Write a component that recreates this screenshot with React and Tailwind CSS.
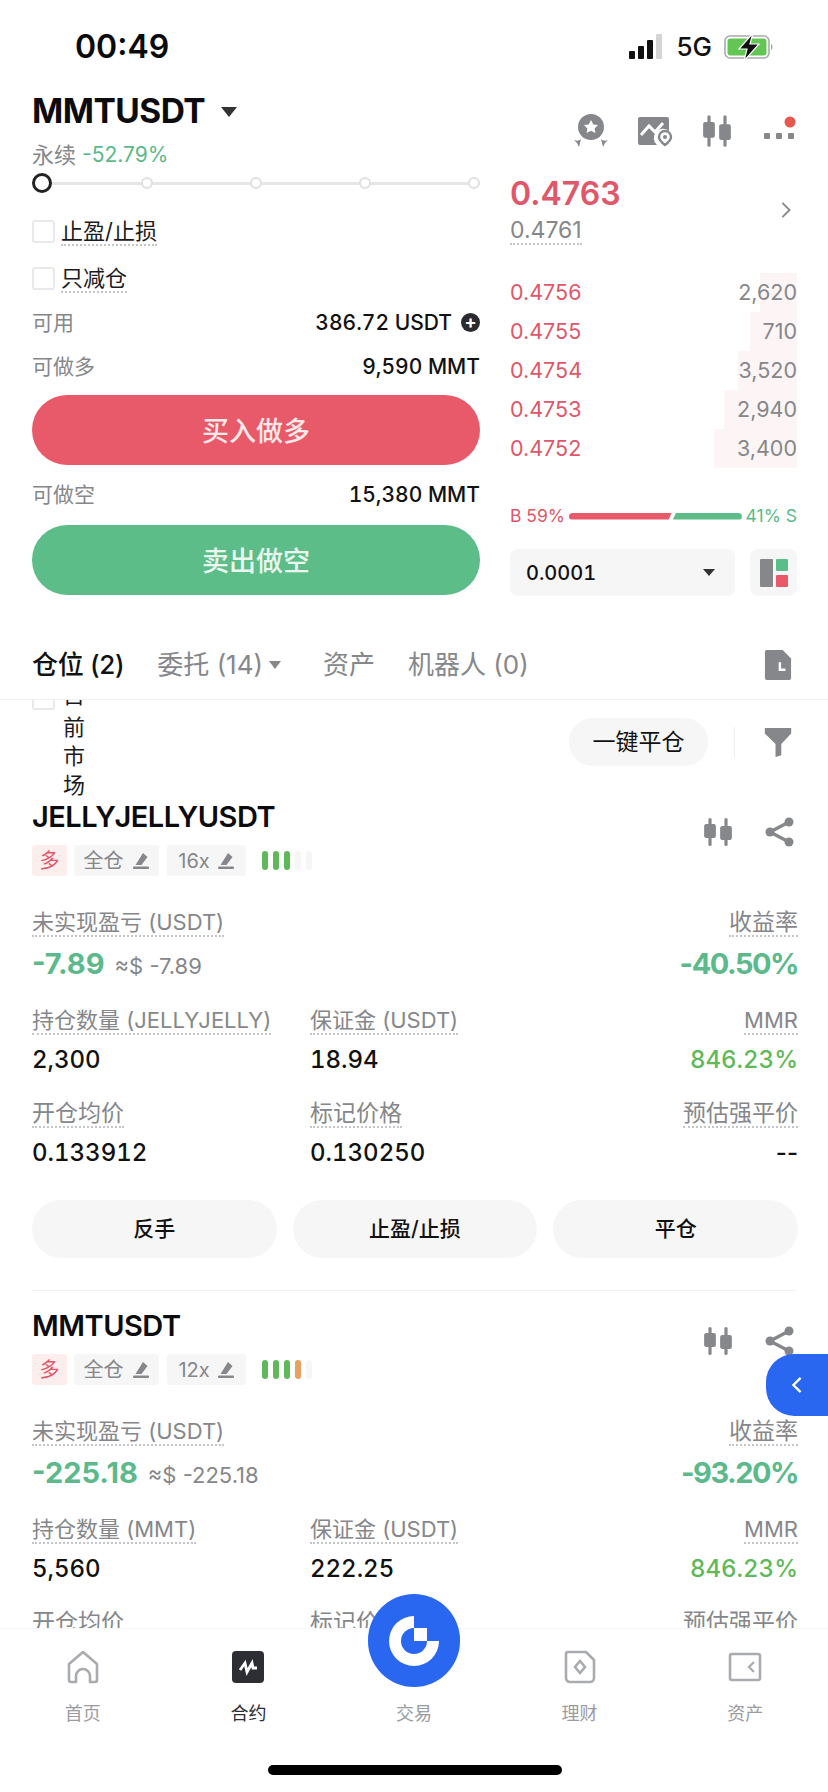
const RED = "#e0566a";
const GREEN = "#5bb98c";

const asks = [
  { price: "0.4756", size: "2,620", depth: 37 },
  { price: "0.4755", size: "710", depth: 47 },
  { price: "0.4754", size: "3,520", depth: 59 },
  { price: "0.4753", size: "2,940", depth: 73 },
  { price: "0.4752", size: "3,400", depth: 83 },
];

const tabsNav = [
  { label: "首页", icon: HomeIcon },
  { label: "合约", icon: FuturesIcon, active: true },
  { label: "交易", icon: null },
  { label: "理财", icon: WealthIcon },
  { label: "资产", icon: WalletIcon },
];

function CandleIcon({ className = "w-[32px] h-[30px]" }) {
  return (
    <svg viewBox="0 0 30 30" className={className} fill="#85878a" preserveAspectRatio="none">
      <rect x="6" y="1" width="3" height="28" rx="1.5" />
      <rect x="2" y="7" width="11" height="14" rx="2" />
      <rect x="21" y="1" width="3" height="28" rx="1.5" />
      <rect x="17" y="9" width="11" height="14" rx="2" />
    </svg>
  );
}

function ShareIcon() {
  return (
    <svg viewBox="0 0 32 32" className="w-[32px] h-[32px]" fill="#85878a" stroke="#85878a">
      <circle cx="25" cy="6" r="4.5" stroke="none" />
      <circle cx="6" cy="16" r="4.5" stroke="none" />
      <circle cx="25" cy="26" r="4.5" stroke="none" />
      <path d="M25 6 6 16l19 10" fill="none" strokeWidth="3.4" />
    </svg>
  );
}

function BadgeIcon() {
  return (
    <svg viewBox="0 0 36 36" className="w-[36px] h-[36px]" fill="#85878a">
      <circle cx="18" cy="14" r="13" />
      <path d="m18 7 2.3 4.4 4.7.7-3.4 3.3.8 4.7-4.4-2.3-4.4 2.3.8-4.7-3.4-3.3 4.7-.7z" fill="#fff" />
      <path d="M1 27c3 1 5 1 7-1l-2 8-2-4zM35 27c-3 1-5 1-7-1l2 8 2-4z" />
    </svg>
  );
}

function ChartAlertIcon() {
  return (
    <svg viewBox="0 0 36 32" className="w-[36px] h-[32px]">
      <path d="M3 2h27a2 2 0 0 1 2 2v12a9 9 0 0 0-12 14H3a2 2 0 0 1-2-2V4a2 2 0 0 1 2-2z" fill="#85878a" />
      <path d="m4 20 8-9 6 6 8-9" fill="none" stroke="#fff" strokeWidth="3" />
      <path d="M28 30c-4-3-6-5-6-8a6 6 0 0 1 12 0c0 3-2 5-6 8z" fill="none" stroke="#85878a" strokeWidth="2.4" />
      <circle cx="28" cy="22" r="2" fill="#85878a" />
    </svg>
  );
}

function EditIcon() {
  return (
    <svg viewBox="0 0 18 18" className="w-[18px] h-[18px]" fill="#85878a">
      <path d="m11 1 4.5 4-6 8H3.5z" />
      <rect x="1" y="14.5" width="16" height="2.5" rx="1" />
    </svg>
  );
}

function HomeIcon() {
  return (
    <svg viewBox="0 0 32 34" className="w-[32px] h-[34px]" fill="none" stroke="#a9abae" strokeWidth="2.6">
      <path d="M2 14 16 2l14 12v16a2 2 0 0 1-2 2h-5v-6a7 7 0 0 0-14 0v6H4a2 2 0 0 1-2-2z" strokeLinejoin="round" />
    </svg>
  );
}

function FuturesIcon() {
  return (
    <svg viewBox="0 0 32 32" className="w-[32px] h-[32px]">
      <rect width="32" height="32" rx="4" fill="#2c2e33" />
      <path d="m8 19 5-7 2 9 5-9 1 5h4" fill="none" stroke="#fff" strokeWidth="2.8" />
    </svg>
  );
}

function WealthIcon() {
  return (
    <svg viewBox="0 0 32 34" className="w-[32px] h-[34px]" fill="none" stroke="#a9abae" strokeWidth="2.6">
      <path d="M4 2h18l8 8v18a4 4 0 0 1-4 4H6a4 4 0 0 1-4-4V4a2 2 0 0 1 2-2z" strokeLinejoin="round" />
      <path d="m16 11 5 6-5 6-5-6z" />
    </svg>
  );
}

function WalletIcon() {
  return (
    <svg viewBox="0 0 34 30" className="w-[34px] h-[30px]" fill="none" stroke="#a9abae" strokeWidth="2.6">
      <rect x="2" y="2" width="30" height="26" rx="2" />
      <path d="m26 10-5 5 5 5" strokeWidth="2.2" />
    </svg>
  );
}

function Dotted({ children, className = "" }) {
  return (
    <span className={`border-b-2 border-dotted border-[#c4c5c8] leading-[25px] inline-block ${className}`}>
      {children}
    </span>
  );
}

function Check({ label }) {
  return (
    <div className="h-[47px] flex items-center gap-[6px]">
      <span className="w-[23px] h-[23px] rounded-[3px] border-2 border-[#e9e9ea]" />
      <Dotted className="text-[22px] text-[#1b1b1d] leading-[26px]">{label}</Dotted>
    </div>
  );
}

function InfoRow({ label, children, className = "" }) {
  return (
    <div className={`flex items-center justify-between ${className}`}>
      <span className="text-[21px] text-[#85878a]">{label}</span>
      <span className="text-[21px] font-medium text-[#111] tabular-nums">{children}</span>
    </div>
  );
}

function Ticks({ colors }) {
  return (
    <div className="flex gap-[5px] ml-[16px]">
      {colors.map((c, i) => (
        <span key={i} className="w-[6px] h-[19px] rounded-full" style={{ background: c }} />
      ))}
    </div>
  );
}

function Cell({ label, value, right, labelClass = "text-[22px]", valueClass = "text-[#111] tabular-nums" }) {
  return (
    <div className={`flex flex-col ${right ? "items-end" : "items-start"}`}>
      <Dotted className={`text-[#85878a] ${labelClass}`}>{label}</Dotted>
      <span className={`mt-[11px] text-[24px] font-medium leading-[28px] ${valueClass}`}>{value}</span>
    </div>
  );
}

function Position({ p }) {
  return (
    <div className="pl-[32px] pr-[30px]">
      <div className="flex justify-between">
        <div>
          <div className="text-[29px] font-semibold leading-[34px] tracking-[-0.5px] text-[#0c0c0e]">{p.name}</div>
          <div className="flex items-center mt-[11px] h-[31px] text-[20px] text-[#85878a]">
            <span className="w-[35px] h-full rounded-[3px] bg-[#fdeeee] text-[#e0566a] flex items-center justify-center">多</span>
            <span className="ml-[7px] w-[85px] h-full rounded-[3px] bg-[#f6f6f6] flex items-center justify-center gap-[8px]">
              全仓 <EditIcon />
            </span>
            <span className="ml-[8px] w-[79px] h-full rounded-[3px] bg-[#f6f6f6] flex items-center justify-center gap-[7px]">
              {p.lev} <EditIcon />
            </span>
            <Ticks colors={p.ticks} />
          </div>
        </div>
        <div className="flex items-center gap-[30px] pb-[12px] pr-[2px]">
          <CandleIcon />
          <ShareIcon />
        </div>
      </div>

      <div className="mt-[34px] flex justify-between">
        <div>
          <Dotted className="text-[22px] text-[#85878a]">未实现盈亏 (USDT)</Dotted>
          <div className="mt-[11px] flex items-baseline gap-[10px] leading-[32px]">
            <span className="text-[29px] font-bold" style={{ color: GREEN }}>{p.pnl}</span>
            <span className="text-[22px] text-[#85878a]">≈$ {p.pnl}</span>
          </div>
        </div>
        <div className="flex flex-col items-end">
          <Dotted className="text-[23px] text-[#85878a]">收益率</Dotted>
          <span className="mt-[11px] text-[29px] font-bold leading-[32px] tracking-[-1.5px]" style={{ color: GREEN }}>{p.roe}</span>
        </div>
      </div>

      <div className="mt-[26px] grid grid-cols-[278px_1fr_auto] gap-y-[27px]">
        <Cell label={`持仓数量 (${p.unit})`} value={p.qty} />
        <Cell label="保证金 (USDT)" value={p.margin} />
        <Cell right label="MMR" value="846.23%" valueClass="text-[#5fb95a] tabular-nums" />
        <Cell label="开仓均价" labelClass="text-[23px]" value={p.entry} />
        <Cell label="标记价格" labelClass="text-[23px]" value={p.mark} />
        <Cell right label="预估强平价" labelClass="text-[23px]" value="--" valueClass="text-[#111]" />
      </div>

      <div className="mt-[33px] grid grid-cols-3 gap-[16px]">
        {["反手", "止盈/止损", "平仓"].map((t) => (
          <button key={t} className="h-[58px] rounded-full bg-[#f6f6f6] text-[21px] font-medium text-[#111]">
            {t}
          </button>
        ))}
      </div>
    </div>
  );
}

const positions = [
  {
    name: "JELLYJELLYUSDT", lev: "16x", pnl: "-7.89", roe: "-40.50%", unit: "JELLYJELLY",
    qty: "2,300", margin: "18.94", entry: "0.133912", mark: "0.130250",
    ticks: ["#5fb95a", "#5fb95a", "#5fb95a", "#f6f6f6", "#f6f6f6"],
  },
  {
    name: "MMTUSDT", lev: "12x", pnl: "-225.18", roe: "-93.20%", unit: "MMT",
    qty: "5,560", margin: "222.25", entry: "0.4751", mark: "0.4763",
    ticks: ["#5fb95a", "#5fb95a", "#5fb95a", "#e8a15d", "#f6f6f6"],
  },
];

export default function App() {
  return (
    <div
      className="relative w-[828px] h-[1792px] bg-white overflow-hidden flex flex-col text-[#111]"
      style={{ fontFamily: 'Inter, "Noto Sans CJK SC", sans-serif' }}
    >
      {/* status bar */}
      <div className="h-[94px] shrink-0 pl-[75px] pr-[52px] pt-[28px] flex justify-between items-start">
        <span className="text-[32px] font-semibold leading-[38px] text-[#0a0a0a]">00:49</span>
        <div className="flex items-center gap-[12px] h-[38px]">
          <svg viewBox="0 0 36 26" className="w-[36px] h-[26px]">
            <rect x="1" y="17" width="6" height="8" rx="1" fill="#111" />
            <rect x="10" y="12" width="6" height="13" rx="1" fill="#111" />
            <rect x="19" y="6" width="6" height="19" rx="1" fill="#111" />
            <rect x="28" y="0" width="6" height="25" rx="1" fill="#d4d5d7" />
          </svg>
          <span className="text-[26px] leading-none font-medium">5G</span>
          <svg viewBox="0 0 52 28" className="w-[52px] h-[28px]">
            <rect x="1" y="3" width="44" height="22" rx="5" fill="none" stroke="#a9abae" strokeWidth="1.6" />
            <rect x="3.5" y="5.5" width="39" height="17" rx="3" fill="#62c554" />
            <path d="M47 11c2 0 2 6 0 6z" fill="#a9abae" />
            <path d="M29 0 15 16h8l-3 12 15-17h-9z" fill="#111" stroke="#fff" strokeWidth="1.2" />
          </svg>
        </div>
      </div>

      {/* trade panel */}
      <div className="shrink-0 flex h-[516px]">
        <div className="w-[448px] ml-[32px]">
          <div className="flex items-center gap-[16px] h-[36px]">
            <span className="text-[33.5px] font-bold leading-none tracking-[-0.5px] text-[#0c0c0e]">MMTUSDT</span>
            <span className="w-0 h-0 border-x-[8px] border-x-transparent border-t-[10px] border-t-[#333]" />
          </div>
          <div className="mt-[10px] flex items-center gap-[6px] h-[30px]">
            <span className="text-[22px] text-[#85878a]">永续</span>
            <span className="text-[21px]" style={{ color: GREEN }}>-52.79%</span>
          </div>

          {/* leverage slider */}
          <div className="mt-[1px] h-[24px] relative flex items-center justify-between">
            <span className="absolute left-0 right-0 h-[3px] bg-[#e6e6e7]" />
            <span className="relative w-[20px] h-[20px] -mr-[8px] rounded-full border-[3px] border-[#222] bg-white" />
            {[0, 1, 2, 3].map((i) => (
              <span key={i} className="relative w-[12px] h-[12px] rounded-full border-2 border-[#e0e0e1] bg-white" />
            ))}
          </div>

          <div className="mt-[13px]">
            <Check label="止盈/止损" />
            <Check label="只减仓" />
          </div>
          <InfoRow label="可用" className="h-[41px]">
            <span className="inline-flex items-center gap-[9px]">
              386.72 USDT
              <span className="w-[19px] h-[19px] rounded-full bg-[#2a2b2e] text-white text-[18px] leading-[18px] text-center font-bold">+</span>
            </span>
          </InfoRow>
          <InfoRow label="可做多" className="h-[47px]">9,590 MMT</InfoRow>
          <button className="mt-[5px] w-full h-[70px] pt-[5px] rounded-full bg-[#e85a69] text-[27px] font-medium text-[#fde9ea]">买入做多</button>
          <InfoRow label="可做空" className="h-[60px]">15,380 MMT</InfoRow>
          <button className="w-full h-[70px] pt-[5px] rounded-full bg-[#5cbd89] text-[27px] font-medium text-[#e9f7ef]">卖出做空</button>
        </div>

        <div className="w-[287px] ml-[30px] flex flex-col">
          <div className="flex justify-end items-center gap-[28px] h-[42px] mt-[16px] relative">
            <BadgeIcon />
            <ChartAlertIcon />
            <CandleIcon className="w-[32px] h-[34px]" />
            <svg viewBox="0 0 34 34" className="w-[34px] h-[34px] ml-[2px]" fill="#85878a">
              <rect x="1" y="19" width="6" height="6" rx="1" />
              <rect x="13" y="19" width="6" height="6" rx="1" />
              <rect x="25" y="19" width="6" height="6" rx="1" />
              <circle cx="27" cy="8" r="5.5" fill="#e8574f" />
            </svg>
          </div>
          <div className="flex justify-between items-center mt-[23px]">
            <div>
              <div className="text-[32px] font-semibold leading-[38px]" style={{ color: RED }}>0.4763</div>
              <Dotted className="text-[23px] text-[#85878a] mt-[5px]">0.4761</Dotted>
            </div>
            <svg viewBox="0 0 12 20" className="w-[12px] h-[18px] mr-[5px]" fill="none" stroke="#85878a" strokeWidth="2">
              <path d="m2 2 8 8-8 8" />
            </svg>
          </div>

          <div className="mt-[28px]">
            {asks.map((a) => (
              <div key={a.price} className="relative h-[39px] flex items-center justify-between text-[21.5px]">
                <span className="absolute right-0 top-0 bottom-0 bg-[#fdf5f5]" style={{ width: a.depth }} />
                <span className="relative" style={{ color: RED }}>{a.price}</span>
                <span className="relative text-[#85878a]">{a.size}</span>
              </div>
            ))}
          </div>

          <div className="mt-[38px] flex items-center justify-between h-[20px] text-[17.5px]">
            <span style={{ color: RED }}>B 59%</span>
            <div className="flex gap-[1px]">
              <span className="w-[103px] h-[7px] rounded-l-full bg-[#e85a69] [clip-path:polygon(0_0,100%_0,97%_100%,0_100%)]" />
              <span className="w-[69px] h-[7px] rounded-r-full bg-[#5cbd89] [clip-path:polygon(5%_0,100%_0,100%_100%,0_100%)]" />
            </div>
            <span style={{ color: GREEN }}>41% S</span>
          </div>

          <div className="mt-[23px] flex justify-between">
            <div className="w-[225px] h-[47px] rounded-[8px] bg-[#f6f6f6] pl-[16px] pr-[20px] flex items-center justify-between">
              <span className="text-[20px] font-medium text-[#111] tabular-nums">0.0001</span>
              <span className="w-0 h-0 border-x-[6px] border-x-transparent border-t-[7px] border-t-[#333]" />
            </div>
            <div className="w-[47px] h-[47px] rounded-[8px] bg-[#f6f6f6] flex items-center justify-center">
              <svg viewBox="0 0 30 30" className="w-[30px] h-[30px]">
                <rect x="1" y="1" width="13" height="28" rx="1" fill="#85878a" />
                <rect x="17" y="1" width="12" height="12" rx="1" fill="#5cbd89" />
                <rect x="17" y="17" width="12" height="12" rx="1" fill="#e85a69" />
              </svg>
            </div>
          </div>
        </div>
      </div>

      {/* tabs */}
      <div className="shrink-0 h-[90px] pl-[32px] pr-[36px] pt-[20px] flex items-center border-b border-[#f0f0f1] text-[26px] text-[#85878a]">
        <span className="text-[#111] font-medium tracking-[-0.3px]">仓位 (2)</span>
        <span className="ml-[33px]">委托 (14)</span>
        <span className="ml-[6px] w-0 h-0 border-x-[6px] border-x-transparent border-t-[8px] border-t-[#85878a]" />
        <span className="ml-[42px]">资产</span>
        <span className="ml-[33px]">机器人 (0)</span>
        <svg viewBox="0 0 30 34" className="ml-auto w-[28px] h-[32px]">
          <path d="M3 1h17l9 9v21a2 2 0 0 1-2 2H3a2 2 0 0 1-2-2V3a2 2 0 0 1 2-2z" fill="#85878a" />
          <path d="M17 14v8h6" fill="none" stroke="#fff" strokeWidth="2.6" />
        </svg>
      </div>

      {/* position list, scrolled */}
      <div className="flex-1 min-h-0 overflow-hidden">
        <div className="-mt-[6px]">
          <div className="pl-[32px] pr-[36px] flex justify-between">
            <div className="flex gap-[8px] items-start">
              <span className="w-[23px] h-[23px] -mt-[7px] rounded-[3px] border-2 border-[#e9e9ea]" />
              <span className="w-[22px] -mt-[12px] text-[22px] leading-[29px] text-[#1b1b1d] break-all pt-[2px]">
                <span className="relative -top-[3px]">目</span>前市场
              </span>
            </div>
            <div className="flex items-center mt-[24px] h-[48px]">
              <button className="ml-[2px] w-[139px] h-[48px] rounded-full bg-[#f6f6f6] text-[23px] text-[#111]">一键平仓</button>
              <span className="ml-[26px] w-[1px] h-[30px] bg-[#eeeeef]" />
              <svg viewBox="0 0 34 32" className="w-[28px] h-[30px] ml-[29px]" fill="#85878a" preserveAspectRatio="none">
                <path d="M1 1h32v6L21 18v12l-7 2V18L1 7z" />
              </svg>
            </div>
          </div>
          <div className="flex flex-col">
            <Position p={positions[0]} />
            <div className="mx-[32px] mt-[32px] mb-[18px] h-[1px] bg-[#f0f0f1]" />
            <Position p={positions[1]} />
          </div>
        </div>
      </div>

      {/* bottom nav */}
      <div className="relative shrink-0 h-[164px] bg-white border-t border-[#f6f6f6]">
        <div className="grid grid-cols-5 pt-[21px]">
          {tabsNav.map((t) => (
            <div key={t.label} className="flex flex-col items-center">
              <div className="h-[34px] flex items-center">{t.icon && <t.icon />}</div>
              <span className={`mt-[17px] text-[18px] leading-[26px] ${t.active ? "text-[#2c2e33]" : "text-[#9a9c9f]"}`}>{t.label}</span>
            </div>
          ))}
        </div>
        <div className="absolute bottom-[17px] left-[268px] w-[294px] h-[10px] rounded-full bg-black" />
      </div>

      {/* centre trade button */}
      <div className="absolute left-[368px] top-[1594px] w-[92px] h-[93px] rounded-full bg-[#2a67f0] flex items-center justify-center">
        <svg viewBox="0 0 54 54" className="w-[54px] h-[54px]">
          <path d="M27 2a25 25 0 1 0 25 25H40V14H27z" fill="#fff" />
          <path d="M27 14a13 13 0 1 0 13 13H27z" fill="#2a67f0" />
        </svg>
      </div>

      {/* side drawer tab */}
      <div className="absolute right-0 top-[1354px] w-[62px] h-[62px] rounded-l-[28px] bg-[#2a67f0] flex items-center justify-center">
        <svg viewBox="0 0 12 20" className="w-[12px] h-[18px]" fill="none" stroke="#fff" strokeWidth="2.6">
          <path d="M10 2 2 10l8 8" />
        </svg>
      </div>
    </div>
  );
}
